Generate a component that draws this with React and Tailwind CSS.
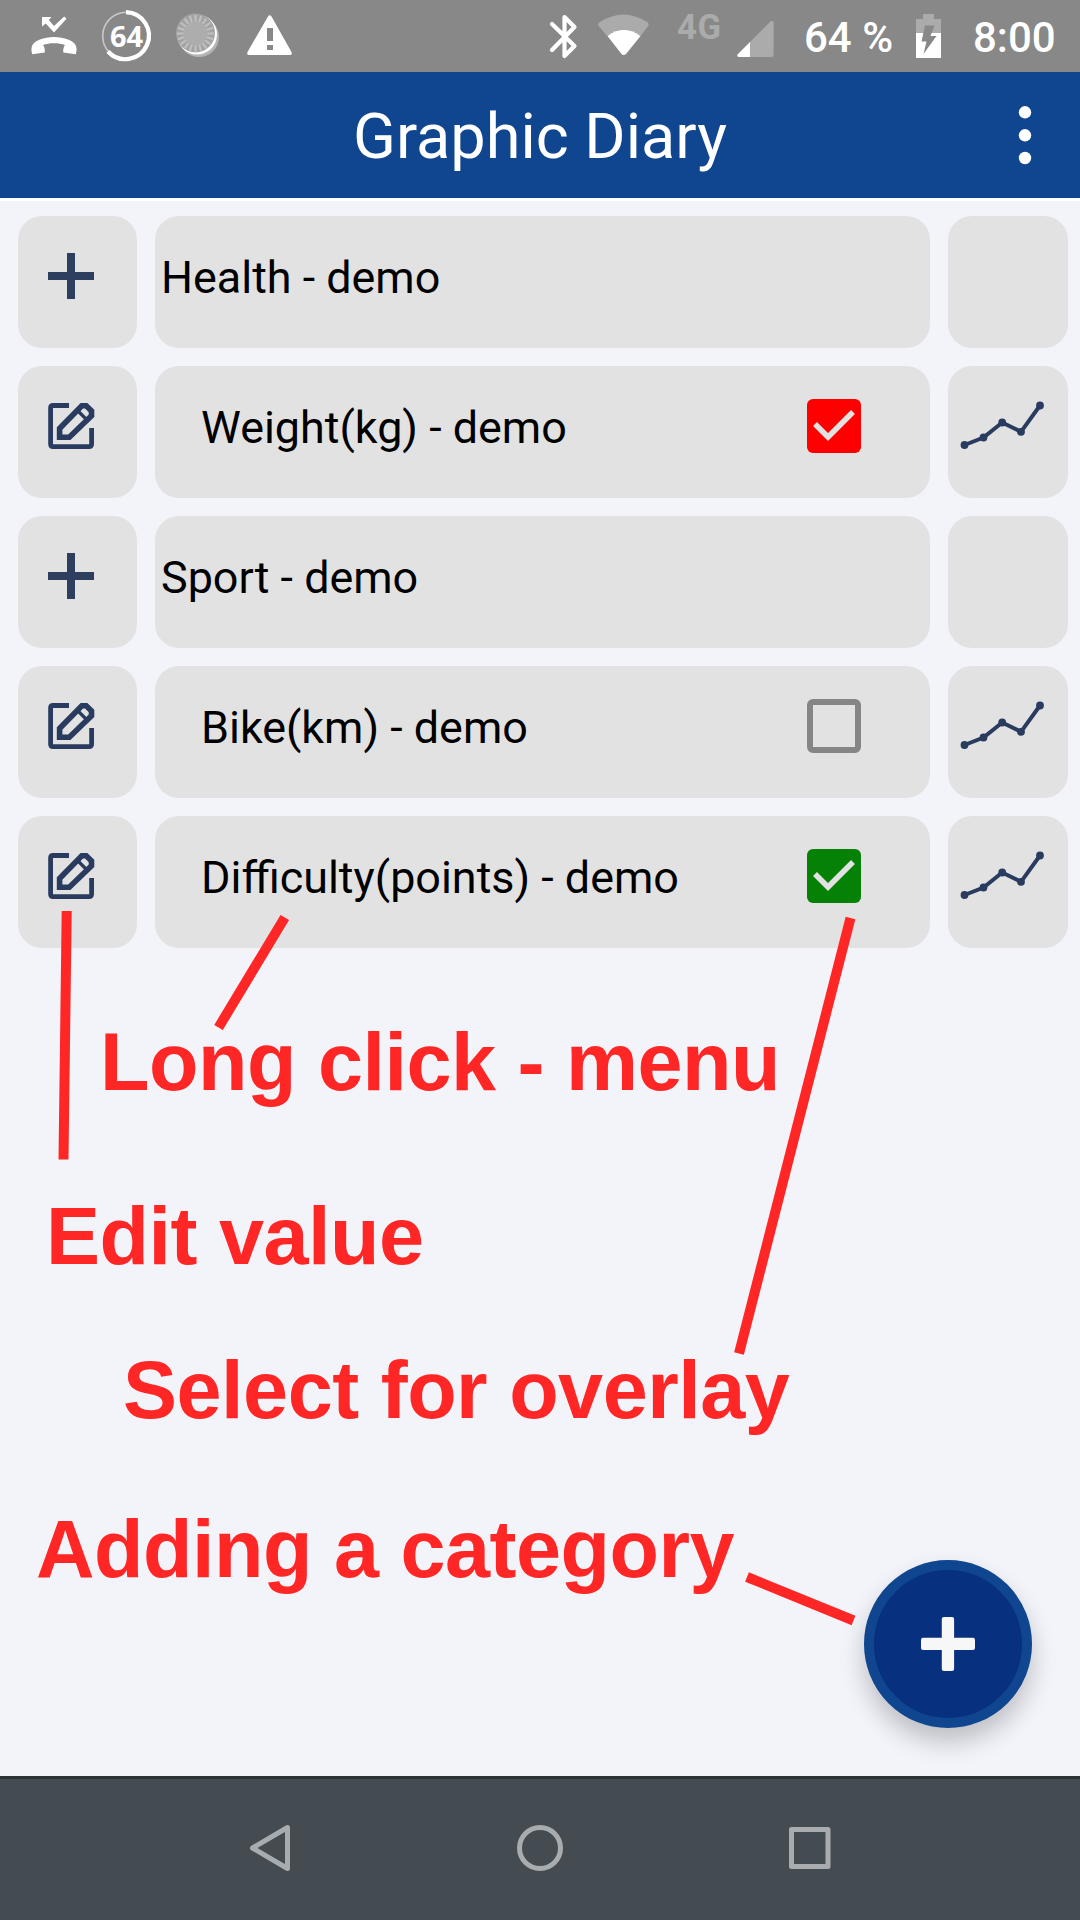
const annotations = [
  { text: "Long click - menu", left: "left-[100px]", top: "top-[1016px]" },
  { text: "Edit value", left: "left-[46px]", top: "top-[1190px]" },
  { text: "Select for overlay", left: "left-[123px]", top: "top-[1344px]" },
  { text: "Adding a category", left: "left-[36px]", top: "top-[1503px]" },
];

const rows = [
  { label: "Health - demo", group: true },
  { label: "Weight(kg) - demo", check: "#ff0000" },
  { label: "Sport - demo", group: true },
  { label: "Bike(km) - demo", check: null },
  { label: "Difficulty(points) - demo", check: "#058205" },
];

function StatusBar() {
  const ticks = Array.from({ length: 20 }, (_, i) => i * 18);
  return (
    <div className="flex h-[72px] bg-[#888888] text-white">
      <svg width="560" height="72" viewBox="0 0 560 72" className="shrink-0">
        <path
          d="M54 37C44 37 34 40.500 32 46C31 49 31.500 52 32.300 54.300L44.800 52.500C45 49.500 44.500 47 43 45C49 42.500 59 42.500 65 45C63.500 47 63 49.500 63.300 52.500L75.800 54.300C76.500 52 77 49 76 46C74 40.500 64 37 54 37Z"
          fill="#fff"
        />
        <path d="M42 17H51.500L48.800 20L54 26L64.200 16.600L66.500 18.800L54 32.500L45.800 23.500L42 26.500Z" fill="#fff" />
        <circle cx="126.500" cy="36" r="23.800" fill="none" stroke="#c8c8c8" strokeWidth="1.600" />
        <path d="M126 12.200A23.500 23.500 0 1 1 108 51.500" fill="none" stroke="#fff" strokeWidth="4.200" />
        <text x="126.500" y="46.500" textAnchor="middle" fill="#fff" fontFamily="Noto Sans, sans-serif" fontWeight="700" fontSize="29">64</text>
        <circle cx="199" cy="37" r="20" fill="#b4b4b4" />
        <circle cx="197" cy="34.500" r="20" fill="#fff" />
        <circle cx="195.500" cy="33" r="19.500" fill="#a3a3a3" />
        {ticks.map((a) => (
          <line key={a} x1="195.500" y1="15" x2="195.500" y2="22.500" stroke="#bfbfbf" strokeWidth="2.200" transform={`rotate(${a} 195.500 33.500)`} />
        ))}
        <circle cx="195.500" cy="33.500" r="12" fill="#adadad" />
        <path d="M268 16.500Q269.500 14 271.500 16.500L291.500 52Q292.500 55 290 55H249Q246.500 55 247.500 52ZM267 28V41H273V28ZM267 45V50H273V45Z" fill="#fff" fillRule="evenodd" />
      </svg>
      <svg width="240" height="72" viewBox="560 0 240 72" className="shrink-0 overflow-visible">
        <path d="M552 24L574.500 46L564.500 56V17L574.500 27L552 50" fill="none" stroke="#fff" strokeWidth="4.200" strokeLinecap="round" strokeLinejoin="round" />
        <path d="M598 25Q598 23 600 22Q623.500 7 647 22Q649.500 23.500 648.500 25.500L640.500 36Q623.500 23 607 36Z" fill="#ababab" />
        <path d="M607.500 36Q623.500 23.500 640.500 36L626 54Q623.500 56 621.500 54Z" fill="#fff" />
        <text x="677" y="38.800" fill="#ababab" fontFamily="Roboto, sans-serif" fontWeight="700" fontSize="34.500" letterSpacing="0.800">4G</text>
        <path d="M750 42L770.500 21.500Q773.600 19.500 773.600 23V55Q773.600 57 771.500 57H750Z" fill="#ababab" />
        <path d="M750 42V57H739Q736.500 56.500 737.500 54.500Z" fill="#fff" />
      </svg>
      <div className="ml-[4px] mt-[12px] flex h-[50px] w-[92px] items-center whitespace-nowrap font-['Roboto',sans-serif] text-[42px] font-medium">64 %</div>
      <svg width="46" height="72" viewBox="906 0 46 72" className="ml-[10px] shrink-0">
        <path d="M923 14H934V19H941V33H916V19H923Z" fill="#ababab" />
        <path d="M916 33H941V58H916Z" fill="#fff" />
        <path d="M925 25.500H934.500L930.500 36H936.500L923.500 54L926.500 41.500H921.500Z" fill="#888" />
      </svg>
      <div className="ml-[21px] mt-[12px] flex h-[50px] items-center whitespace-nowrap font-['Roboto',sans-serif] text-[42px] font-medium">8:00</div>
    </div>
  );
}

function EditIcon() {
  return (
    <svg width="48" height="48" viewBox="0 0 48 48" fill="none" stroke="#293b5f" strokeWidth="4.800">
      <path d="M22 2.500H6Q3.600 2.500 3.600 5V41Q3.600 43.600 6 43.600H42Q44.600 43.600 44.600 41V25" />
      <path d="M12.600 34.300V25.500L34.800 2.800H39.200L44.500 8V12.800L22.300 34.300Z" strokeWidth="5.600" />
      <path d="M31 8L39.500 16.500" strokeWidth="3.200" />
    </svg>
  );
}

function PlusIcon() {
  return (
    <svg width="48" height="48" viewBox="0 0 48 48" fill="none" stroke="#2d3e5f" strokeWidth="8">
      <path d="M1 23H47M24 0V46" />
    </svg>
  );
}

function TrendIcon() {
  const pts = [[5.500, 47], [24.500, 39.500], [43.200, 24.500], [62, 33.800], [81, 7.500]];
  return (
    <svg width="88" height="54" viewBox="0 0 88 54" fill="#293b5f">
      <polyline points={pts.map((p) => p.join(",")).join(" ")} fill="none" stroke="#293b5f" strokeWidth="4" />
      {pts.map(([x, y]) => (
        <circle key={x} cx={x} cy={y} r="3.900" />
      ))}
    </svg>
  );
}

function CheckBox({ color }) {
  return (
    <svg width="54" height="54" viewBox="0 0 54 54" fill="none">
      {color ? (
        <>
          <rect width="54" height="54" rx="6" fill={color} />
          <path d="M8 25L21 38L46 13" stroke="#e2e2e2" strokeWidth="5.500" />
        </>
      ) : (
        <rect x="3" y="3" width="48" height="48" rx="3" stroke="#858585" strokeWidth="6" />
      )}
    </svg>
  );
}

function Row({ row }) {
  return (
    <div className="flex h-[132px] gap-[18px]">
      <div className="flex w-[119px] justify-center rounded-[24px] bg-[#e2e2e2] pr-[13px] pt-[37px]">
        {row.group ? <PlusIcon /> : <EditIcon />}
      </div>
      <div className={`flex w-[775px] justify-between rounded-[24px] bg-[#e2e2e2] pr-[69px] ${row.group ? "pl-[6px]" : "pl-[46px]"}`}>
        <span className="mt-[35px] whitespace-nowrap font-['Roboto',sans-serif] text-[44.9px] leading-[53px] text-black">{row.label}</span>
        {!row.group && (
          <div className="pt-[33px]">
            <CheckBox color={row.check} />
          </div>
        )}
      </div>
      <div className="w-[120px] rounded-[24px] bg-[#e2e2e2] pl-[11px] pt-[32px]">{!row.group && <TrendIcon />}</div>
    </div>
  );
}

export default function App() {
  return (
    <div className="relative flex h-[1920px] w-[1080px] flex-col overflow-hidden bg-[#f3f4fa]">
      <StatusBar />
      <header className="relative flex h-[129px] justify-center border-b-[3px] border-white bg-[#10468f]">
        <h1 className="mt-[28px] whitespace-nowrap font-['Roboto',sans-serif] text-[63px] leading-[74px] text-white">Graphic Diary</h1>
        <svg width="20" height="66" viewBox="0 0 20 66" fill="#fff" className="absolute right-[45px] top-[30px]">
          <circle cx="10" cy="10.300" r="6.200" />
          <circle cx="10" cy="33.300" r="6.200" />
          <circle cx="10" cy="56" r="6.200" />
        </svg>
      </header>
      <main className="flex flex-1 flex-col gap-[18px] pl-[18px] pt-[15px]">
        {rows.map((r) => (
          <Row key={r.label} row={r} />
        ))}
      </main>
      <nav className="flex h-[144px] items-center justify-between border-t-[3px] border-[#2b3335] bg-[#454c51] px-[246px]">
        <svg width="48" height="54" viewBox="0 0 48 54" fill="none" stroke="#a9acae" strokeWidth="5" strokeLinejoin="round">
          <path d="M6.500 25L41.500 4.500V45.500Z" />
        </svg>
        <svg width="48" height="54" viewBox="0 0 48 54" fill="none" stroke="#a9acae" strokeWidth="5">
          <circle cx="24" cy="25" r="20.500" />
        </svg>
        <svg width="48" height="54" viewBox="0 0 48 54" fill="none" stroke="#a9acae" strokeWidth="5" strokeLinejoin="round">
          <path d="M5.500 6.500H42V43.500H5.500Z" />
        </svg>
      </nav>

      <button className="absolute left-[864px] top-[1560px] flex h-[168px] w-[168px] items-center justify-center rounded-full border-[10px] border-[#10468f] bg-[#07317e] shadow-[0_14px_24px_rgba(0,0,0,0.22)]">
        <svg width="54" height="54" viewBox="0 0 54 54" fill="#f7f7f7">
          <rect x="0" y="20.700" width="54" height="12.300" rx="2" />
          <rect x="20.800" y="0" width="12.300" height="54" rx="2" />
        </svg>
      </button>

      {annotations.map((a) => (
        <p key={a.text} className={`absolute whitespace-nowrap font-['Liberation_Sans',sans-serif] text-[81px] font-bold leading-[93px] tracking-[-0.5px] text-[#ff2626] ${a.left} ${a.top}`}>
          {a.text}
        </p>
      ))}
      <svg width="1080" height="1920" viewBox="0 0 1080 1920" className="pointer-events-none absolute left-0 top-0" stroke="#ff2626" strokeWidth="10">
        <path d="M66.700 911L63.500 1159.500M284.800 917.500L218.500 1027.500M850.500 918L739 1353.500M747 1577L853.500 1620.500" fill="none" />
      </svg>
    </div>
  );
}
